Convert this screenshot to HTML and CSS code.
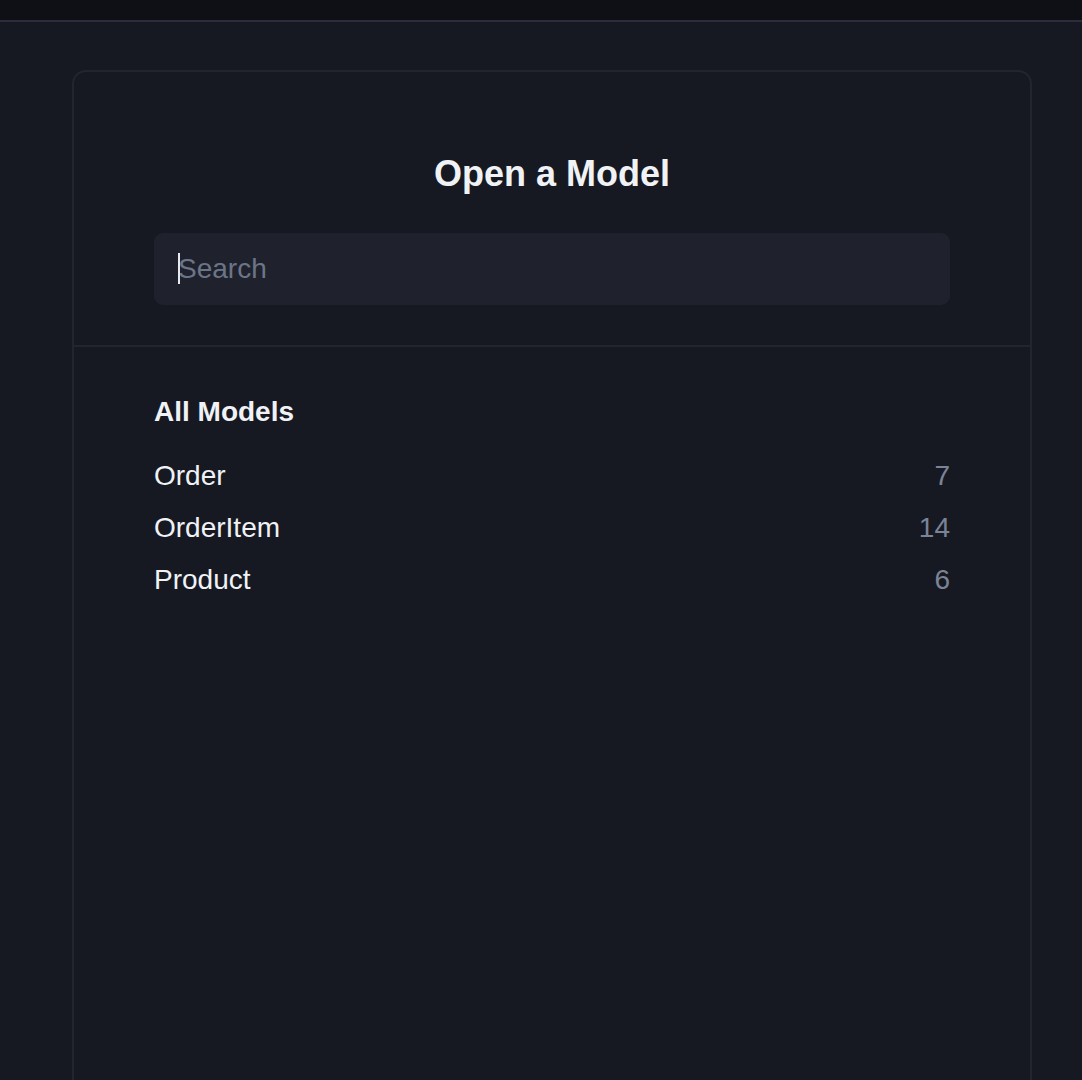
FILE: index.html
```html
<!DOCTYPE html>
<html lang="en">
<head>
<meta charset="utf-8">
<title>Open a Model</title>
<link rel="stylesheet" href="styles.css">
</head>
<body>
<div class="topbar"></div>
<main class="main">
  <section class="card">
    <header class="card-head">
      <h1 class="title">Open a Model</h1>
      <div class="search">
        <input class="search-input" type="text" placeholder="Search">
        <span class="caret"></span>
      </div>
    </header>
    <div class="card-body">
      <h2 class="section-title">All Models</h2>
      <ul class="model-list">
        <li class="model-row"><span class="model-name">Order</span><span class="model-count">7</span></li>
        <li class="model-row"><span class="model-name">OrderItem</span><span class="model-count">14</span></li>
        <li class="model-row"><span class="model-name">Product</span><span class="model-count">6</span></li>
      </ul>
    </div>
  </section>
</main>
</body>
</html>
```

FILE: styles.css
```css
html, body {
  margin: 0;
  padding: 0;
  height: 100%;
}
body {
  background: #161922;
  color: #f0f2f5;
  font-family: "Liberation Sans", Arial, Helvetica, sans-serif;
  overflow: hidden;
}
.topbar {
  height: 20px;
  background: #0e1015;
  border-bottom: 2px solid #2b2e3a;
}
.main {
  padding: 48px 0 0 72px;
}
.card {
  box-sizing: border-box;
  width: 960px;
  height: 1010px;
  border: 2px solid #22252f;
  border-bottom: 0;
  border-radius: 14px 14px 0 0;
  background: #161922;
}
.card-head {
  padding: 80px 80px 40px 80px;
  border-bottom: 2px solid #22252f;
  display: flex;
  flex-direction: column;
  gap: 37px;
}
.title {
  margin: 0;
  font-size: 36px;
  line-height: 44px;
  font-weight: 700;
  text-align: center;
  color: #f0f2f5;
}
.search {
  position: relative;
  height: 72px;
  background: #1f222c;
  border-radius: 9px;
}
.search-input {
  box-sizing: border-box;
  width: 100%;
  height: 72px;
  border: 0;
  outline: none;
  background: transparent;
  padding: 0 24px;
  font-family: inherit;
  font-size: 28px;
  color: #f0f2f5;
}
.search-input::placeholder {
  color: #6c7588;
}
.caret {
  position: absolute;
  left: 24px;
  top: 20px;
  width: 2px;
  height: 31px;
  background: #e8eaee;
}
.card-body {
  padding: 47px 80px 0 80px;
}
.section-title {
  margin: 0 0 20px 0;
  font-size: 28px;
  line-height: 36px;
  font-weight: 700;
  color: #f0f2f5;
}
.model-list {
  list-style: none;
  margin: 0;
  padding: 0;
}
.model-row {
  display: flex;
  justify-content: space-between;
  align-items: center;
  height: 52px;
  font-size: 28px;
  line-height: 52px;
}
.model-name {
  color: #f0f2f5;
}
.model-count {
  color: #7b8496;
}
```
